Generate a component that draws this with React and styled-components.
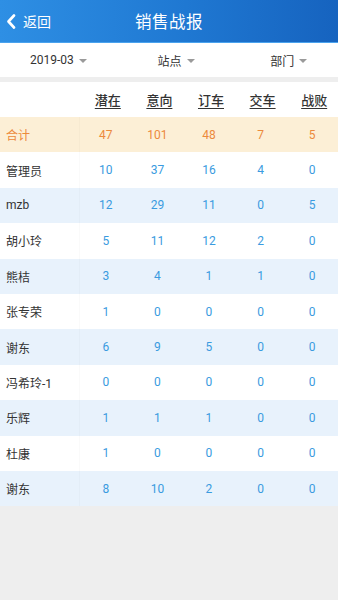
import React from 'react';
import styled, { createGlobalStyle } from 'styled-components';

const GlobalStyle = createGlobalStyle`
  html, body {
    margin: 0;
    padding: 0;
    background: #eeeeee;
    font-family: Roboto, "Noto Sans CJK SC", sans-serif;
  }
  #root {
    min-height: 600px;
    background: #eeeeee;
  }
`;

const rows = [
  { name: '管理员', v: [10, 37, 16, 4, 0] },
  { name: 'mzb', v: [12, 29, 11, 0, 5] },
  { name: '胡小玲', v: [5, 11, 12, 2, 0] },
  { name: '熊桔', v: [3, 4, 1, 1, 0] },
  { name: '张专荣', v: [1, 0, 0, 0, 0] },
  { name: '谢东', v: [6, 9, 5, 0, 0] },
  { name: '冯希玲-1', v: [0, 0, 0, 0, 0] },
  { name: '乐辉', v: [1, 1, 1, 0, 0] },
  { name: '杜康', v: [1, 0, 0, 0, 0] },
  { name: '谢东', v: [8, 10, 2, 0, 0] },
];

const cols = ['潜在', '意向', '订车', '交车', '战败'];

// Header bar

const TopBar = styled.header`
  height: 42px;
  display: grid;
  grid-template-columns: 80px 1fr 80px;
  align-items: center;
  background: linear-gradient(90deg, #2e8fe4 0%, #1f78d2 55%, #1663bf 100%);
  border-bottom: 1px solid #4aa3ee;
  color: #fff;
`;

const Back = styled.div`
  display: flex;
  align-items: center;
  gap: 7px;
  padding-left: 6px;
  font-size: 14px;
`;

const Title = styled.div`
  text-align: center;
  font-size: 16.5px;
  letter-spacing: 0.5px;
`;

const Filters = styled.div`
  height: 34px;
  display: grid;
  grid-template-columns: repeat(3, 1fr);
  background: #fff;
  margin-bottom: 5px;
`;

const Filter = styled.div`
  display: flex;
  align-items: center;
  justify-content: center;
  gap: 5px;
  font-size: 12px;
  color: #333;
  padding-left: ${p => p.$shift || 0}px;
`;

const Caret = styled.span`
  width: 0;
  height: 0;
  border-left: 4.5px solid transparent;
  border-right: 4.5px solid transparent;
  border-top: 4.5px solid #9a9a9a;
  margin-top: 1px;
`;

// Table

const Table = styled.div`
  background: #fff;
`;

const Row = styled.div`
  display: grid;
  grid-template-columns: 80px repeat(5, 1fr);
  align-items: center;
  height: ${p => (p.$head ? 35 : 35.4)}px;
  background: ${p => p.$bg};
  font-size: 12px;
`;

const HeadCell = styled.div`
  text-align: center;
  font-size: 13px;
  font-weight: 500;
  color: #333;
  text-decoration: underline;
  text-underline-offset: 3px;
  padding-left: 4px;
`;

const NameCell = styled.div`
  padding-left: 6px;
  color: ${p => (p.$total ? '#ec8a3c' : '#333')};
  height: 100%;
  display: flex;
  align-items: center;
  border-right: 1px solid rgba(0, 0, 0, 0.02);
`;

const NumCell = styled.div`
  text-align: center;
  color: ${p => (p.$total ? '#ec8a3c' : '#3a9be0')};
`;

export default function App() {
  return (
    <>
      <GlobalStyle />
      <TopBar>
        <Back>
          <svg width="10" height="15" viewBox="0 0 10 15">
            <path d="M8 1.5L2.5 7.5L8 13.5" fill="none" stroke="#fff" strokeWidth="2.6" strokeLinecap="round" strokeLinejoin="round" />
          </svg>
          返回
        </Back>
        <Title>销售战报</Title>
        <div />
      </TopBar>
      <Filters>
        <Filter $shift={4}>2019-03<Caret /></Filter>
        <Filter $shift={14}>站点<Caret /></Filter>
        <Filter $shift={14}>部门<Caret /></Filter>
      </Filters>
      <Table>
        <Row $head $bg="#fff">
          <div />
          {cols.map(c => <HeadCell key={c}>{c}</HeadCell>)}
        </Row>
        <Row $bg="#fcefd6">
          <NameCell $total>合计</NameCell>
          {[47, 101, 48, 7, 5].map((n, i) => <NumCell key={i} $total>{n}</NumCell>)}
        </Row>
        {rows.map((r, i) => (
          <Row key={i} $bg={i % 2 ? '#e8f2fc' : '#fff'}>
            <NameCell>{r.name}</NameCell>
            {r.v.map((n, j) => <NumCell key={j}>{n}</NumCell>)}
          </Row>
        ))}
      </Table>
    </>
  );
}
